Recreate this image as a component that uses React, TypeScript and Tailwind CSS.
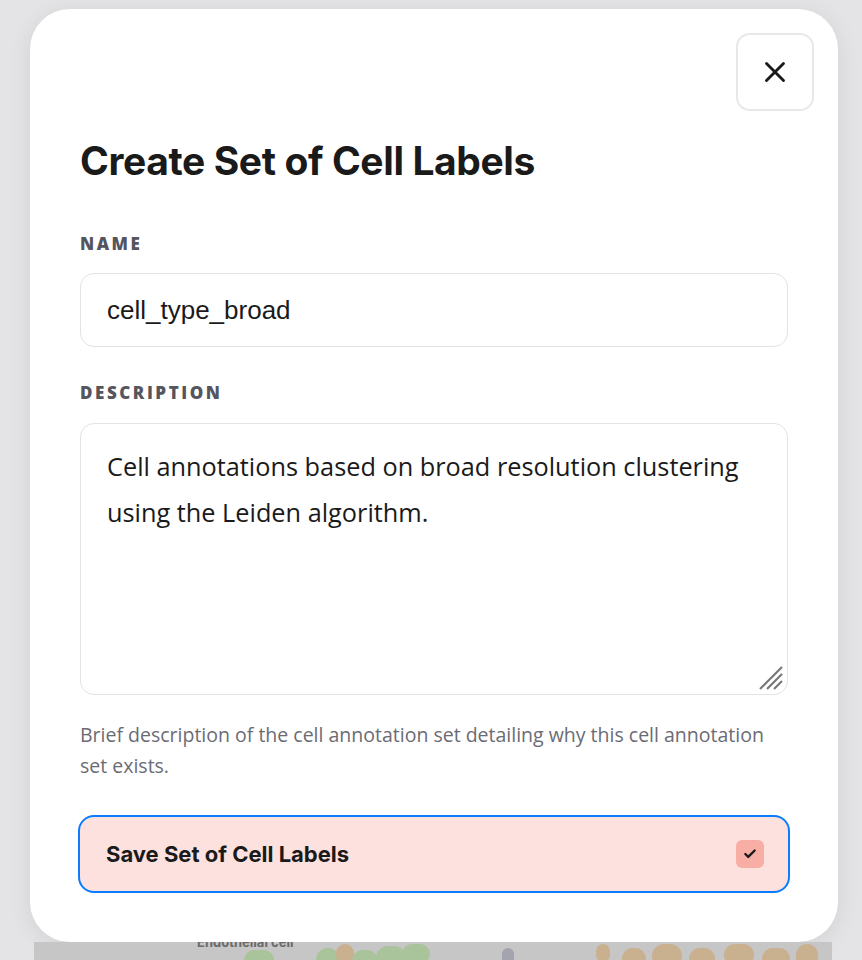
import { X, Check } from 'lucide-react'

const dots = [
  { x: 210, y: 8, w: 30, h: 20, c: '#a9c39a' },
  { x: 282, y: 6, w: 24, h: 24, c: '#a9c39a' },
  { x: 302, y: 2, w: 18, h: 20, c: '#c9b08f' },
  { x: 318, y: 8, w: 26, h: 22, c: '#a9c39a' },
  { x: 342, y: 4, w: 30, h: 24, c: '#a9c39a' },
  { x: 368, y: 2, w: 28, h: 20, c: '#a9c39a' },
  { x: 468, y: 6, w: 12, h: 20, c: '#a4a4ae' },
  { x: 562, y: 2, w: 14, h: 18, c: '#c9b08f' },
  { x: 588, y: 6, w: 24, h: 22, c: '#c9b08f' },
  { x: 618, y: 2, w: 30, h: 24, c: '#c9b08f' },
  { x: 655, y: 6, w: 26, h: 22, c: '#c9b08f' },
  { x: 690, y: 2, w: 30, h: 22, c: '#c9b08f' },
  { x: 728, y: 6, w: 28, h: 22, c: '#c9b08f' },
  { x: 762, y: 2, w: 22, h: 24, c: '#c9b08f' },
]

function Backdrop() {
  return (
    <div className="relative ml-[34px] mr-[30px] h-[18px] overflow-hidden bg-[#c6c6c6]">
      <span className="absolute left-[163px] top-[-8px] font-['Inter',sans-serif] text-[13px] font-bold leading-[16px] text-[#6a6a6a]">
        Endothelial cell
      </span>
      {dots.map((d, i) => (
        <span
          key={i}
          className="absolute rounded-full"
          style={{ left: d.x, top: d.y, width: d.w, height: d.h, background: d.c }}
        />
      ))}
    </div>
  )
}

export default function App() {
  return (
    <div className="min-h-screen overflow-hidden bg-[#e4e4e6] pt-[9px]">
      <div className="relative ml-[30px] mr-[24px] h-[933px] rounded-[40px] bg-white px-[50px] pt-[129px] shadow-[0_4px_24px_rgba(0,0,0,0.08)]">
        <button className="absolute right-6 top-6 flex h-[78px] w-[78px] items-center justify-center rounded-[14px] border-2 border-[#e8e8e8] bg-white text-[#1a1a1a]">
          <X size={34} strokeWidth={2} />
        </button>

        <h1 className="font-['Inter',sans-serif] text-[39px] font-bold leading-[46px] tracking-[-0.01em] text-[#1a1a1a]">
          Create Set of Cell Labels
        </h1>

        <label className="mt-[49px] block font-['Open_Sans',sans-serif] text-[17px] font-extrabold uppercase leading-[22px] tracking-[0.15em] text-[#55555e]">
          Name
        </label>
        <div className="mt-[18px] flex h-[74px] items-center rounded-[14px] border border-[#e3e3e3] px-[26px] font-['Liberation_Sans',sans-serif] text-[26px] text-[#1a1a1a]">
          cell_type_broad
        </div>

        <label className="mt-[35px] block font-['Open_Sans',sans-serif] text-[17px] font-extrabold uppercase leading-[22px] tracking-[0.15em] text-[#55555e]">
          Description
        </label>
        <div className="relative mt-[19px] h-[272px] rounded-[14px] border border-[#e3e3e3] px-[26px] pt-[19px] font-['Open_Sans',sans-serif] text-[25.3px] leading-[46px] text-[#1a1a1a]">
          Cell annotations based on broad resolution clustering using the Leiden algorithm.
          <svg className="absolute bottom-[3px] right-[3px]" width="26" height="26" viewBox="0 0 26 26">
            <g stroke="#777" strokeWidth="2.2">
              <line x1="2" y1="24" x2="24" y2="2" />
              <line x1="9" y1="24" x2="24" y2="9" />
              <line x1="16" y1="24" x2="24" y2="16" />
            </g>
          </svg>
        </div>

        <p className="mt-[24px] font-['Open_Sans',sans-serif] text-[19.5px] leading-[31px] text-[#6b6b74]">
          Brief description of the cell annotation set detailing why this cell annotation set exists.
        </p>

        <button className="mx-[-2px] mt-[34px] flex h-[78px] w-[calc(100%+4px)] items-center justify-between rounded-[16px] border-2 border-[#0a7cff] bg-[#fde1de] pl-[26px] pr-[24px]">
          <span className="font-['Inter',sans-serif] text-[22px] font-bold text-[#1a1a1a]">
            Save Set of Cell Labels
          </span>
          <span className="flex h-[28px] w-[28px] items-center justify-center rounded-[6px] bg-[#f8aea5] text-[#1a1a1a]">
            <Check size={14} strokeWidth={4} />
          </span>
        </button>
      </div>
      <Backdrop />
    </div>
  )
}
